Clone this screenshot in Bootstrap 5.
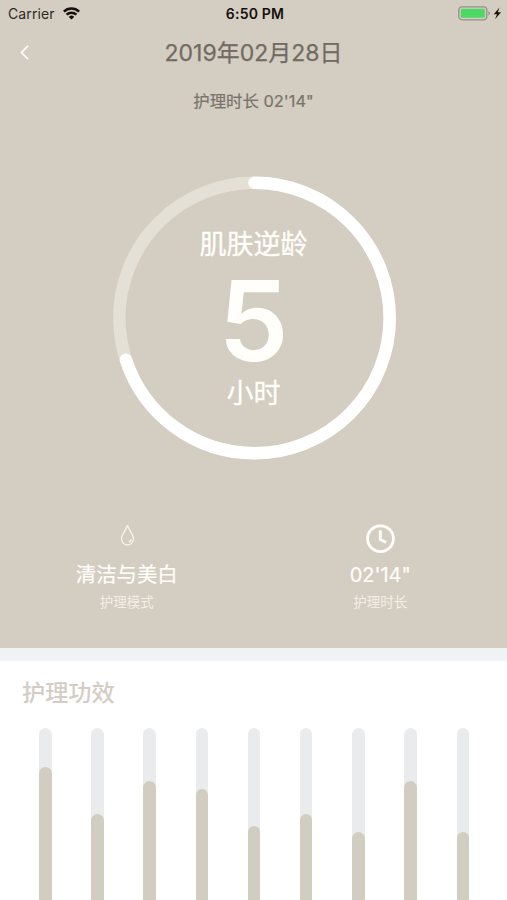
<!DOCTYPE html>
<html lang="zh-CN">
<head>
<meta charset="utf-8">
<meta name="viewport" content="width=device-width, initial-scale=1">
<title>护理时长</title>
<link href="https://cdn.jsdelivr.net/npm/bootstrap@5.3.0/dist/css/bootstrap.min.css" rel="stylesheet">
<style>
  body { font-family: Inter, "Noto Sans CJK SC", sans-serif; background: #fff; height: 900px; overflow: hidden; }
  svg { display: block; }
  .hero { background: #d4cdc1; height: 648px; color: #fffefa; }
  .status { height: 27px; padding: 0 5px 0 8px; color: #14110e; font-size: 14px; line-height: 27px; }
  .carrier { color: #2c2925; letter-spacing: .1px; }
  .clock-text { font-weight: 600; letter-spacing: .2px; }
  .title-row { height: 50px; padding: 0 20px; color: #706b63; }
  .date { font-size: 23px; font-weight: 400; line-height: 50px; padding-top: 1px; -webkit-text-stroke: .25px; }
  .duration { font-size: 16.4px; font-weight: 400; line-height: 49px; height: 48px; color: #79746b; -webkit-text-stroke: .2px; }
  .ring { width: 284px; height: 284px; margin-top: 51px; }
  .ring-label { font-size: 27px; line-height: 40px; -webkit-text-stroke: .3px; }
  .ring-value { font-size: 112px; font-weight: 600; line-height: 108px; padding-top: 1px; }
  .ring-text { padding-top: 3px; }
  .stats { margin-top: 60px; }
  .stat-icon { height: 37px; }
  .drop { margin: -8px 0 0 2px; }
  .stat-value { font-size: 20.4px; line-height: 36px; -webkit-text-stroke: .2px; }
  .stat-time { font-size: 20px; }
  .stat-name { font-size: 13.5px; line-height: 18px; color: #f3efe7; }
  .divider { height: 13px; background: #f0f3f3; }
  .effects-title { font-size: 23.2px; line-height: 34px; color: #d5cdc5; padding: 15px 22px 0; margin-bottom: 18px; }
  .bars { height: 172px; padding: 0 38px 0 39px; }
  .bar-track { width: 12.5px; background: #e9ebec; border-radius: 7px 7px 0 0; }
  .bar-fill { background: #d2cdc1; border-radius: 7px 7px 0 0; }
</style>
</head>
<body>
<main>
  <section class="hero">
    <div class="status row g-0">
      <div class="col d-flex align-items-center">
        <span class="carrier">Carrier</span>
        <svg class="ms-2" width="17" height="13" viewBox="0 0 17 13" fill="none" stroke="#14110e" stroke-width="2.5"><path d="M.9 4.6a10.8 10.8 0 0 1 15.2 0M3.6 7.7a7 7 0 0 1 9.8 0"/><path d="M8.5 12.6 5.800 9.900a3.800 3.800 0 0 1 5.400 0z" fill="#14110e" stroke="none"/></svg>
      </div>
      <div class="col-auto clock-text">6:50 PM</div>
      <div class="col d-flex align-items-center justify-content-end">
        <svg width="44" height="15" viewBox="0 0 44 15"><rect x=".8" y=".8" width="28" height="13" rx="3.2" fill="none" stroke="#969087" stroke-width="1.3"/><rect x="2.8" y="2.8" width="24" height="9" rx="1.3" fill="#4cd964"/><path d="M30.4 5.200c2 .6 2 3.600 0 4.200z" fill="#969087"/><path d="M41.500 1.500 35.800 8.200h3.200L37 13.300l6-7h-3.200z" fill="#14110e"/></svg>
      </div>
    </div>
    <header class="title-row row g-0 align-items-center">
      <div class="col"><svg width="9" height="15" viewBox="0 0 9 15" fill="none" stroke="#fffefa" stroke-width="1.700"><path d="M8 .9 1.400 7.500 8 14.100"/></svg></div>
      <div class="col-auto date">2019年02月28日</div>
      <div class="col"></div>
    </header>
    <div class="duration text-center">护理时长 02'14"</div>
    <div class="ring mx-auto position-relative">
      <svg width="284" height="284" viewBox="0 0 284 284" fill="none" stroke-width="12.500">
        <circle cx="142.500" cy="142" r="135.200" stroke="#e4e0d5"/>
        <circle cx="142.500" cy="142" r="135.200" stroke="#fff" stroke-linecap="round" pathLength="100" stroke-dasharray="70 100" transform="rotate(-90 142.500 142)"/>
      </svg>
      <div class="ring-text position-absolute top-0 start-0 w-100 h-100 d-flex flex-column align-items-center justify-content-center">
        <div class="ring-label">肌肤逆龄</div>
        <div class="ring-value">5</div>
        <div class="ring-label">小时</div>
      </div>
    </div>
    <div class="stats row g-0 text-center">
      <div class="col-6">
        <div class="stat-icon d-flex align-items-center justify-content-center">
          <svg class="drop" width="15" height="22" viewBox="0 0 15 22" fill="none" stroke="#f8f5ed" stroke-width="1.300"><path d="M7.500 1.200C6.600 5.800 1.500 10 1.500 15a6 5.800 0 0 0 12 0C13.500 10 8.400 5.800 7.500 1.200z"/><path d="M11 15.500c-.2 1.300-.9 2-2 2.400" stroke-width="1.600"/></svg>
        </div>
        <div class="stat-value">清洁与美白</div>
        <div class="stat-name">护理模式</div>
      </div>
      <div class="col-6">
        <div class="stat-icon d-flex align-items-center justify-content-center">
          <svg width="30" height="30" viewBox="0 0 30 30" fill="none" stroke="#fffefa" stroke-width="2.800"><circle cx="15.500" cy="14.700" r="12.900"/><path d="M15.300 6.200v9.300l5.800 3"/></svg>
        </div>
        <div class="stat-value stat-time">02'14"</div>
        <div class="stat-name">护理时长</div>
      </div>
    </div>
  </section>
  <div class="divider"></div>
  <section>
    <h2 class="effects-title">护理功效</h2>
    <div class="bars d-flex justify-content-between">
      <div class="bar-track d-flex align-items-end"><div class="bar-fill w-100" style="height:133px"></div></div>
      <div class="bar-track d-flex align-items-end"><div class="bar-fill w-100" style="height:86px"></div></div>
      <div class="bar-track d-flex align-items-end"><div class="bar-fill w-100" style="height:119.500px"></div></div>
      <div class="bar-track d-flex align-items-end"><div class="bar-fill w-100" style="height:111px"></div></div>
      <div class="bar-track d-flex align-items-end"><div class="bar-fill w-100" style="height:74px"></div></div>
      <div class="bar-track d-flex align-items-end"><div class="bar-fill w-100" style="height:86px"></div></div>
      <div class="bar-track d-flex align-items-end"><div class="bar-fill w-100" style="height:68.500px"></div></div>
      <div class="bar-track d-flex align-items-end"><div class="bar-fill w-100" style="height:119.500px"></div></div>
      <div class="bar-track d-flex align-items-end"><div class="bar-fill w-100" style="height:68.500px"></div></div>
    </div>
  </section>
</main>
<script src="https://cdn.jsdelivr.net/npm/bootstrap@5.3.0/dist/js/bootstrap.bundle.min.js"></script>
</body>
</html>
